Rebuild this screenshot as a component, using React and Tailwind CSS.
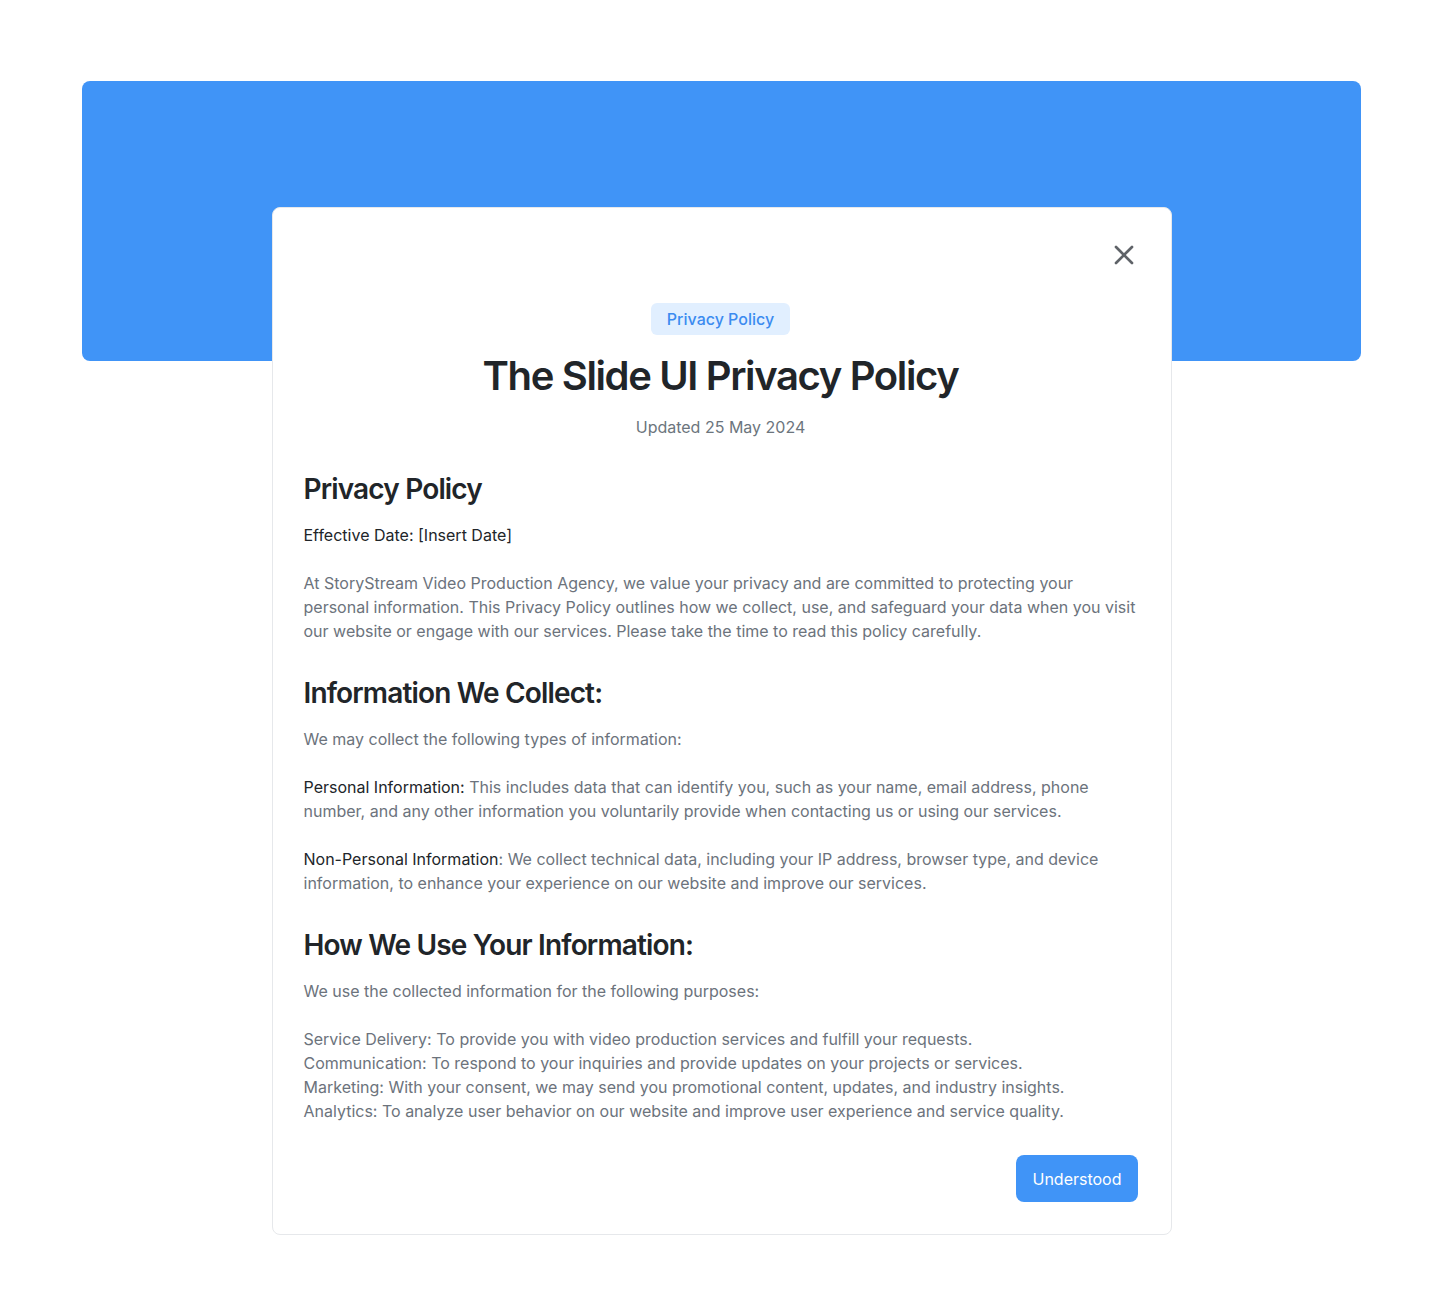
import { X } from "lucide-react";

const uses = [
  "Service Delivery: To provide you with video production services and fulfill your requests.",
  "Communication: To respond to your inquiries and provide updates on your projects or services.",
  "Marketing: With your consent, we may send you promotional content, updates, and industry insights.",
  "Analytics: To analyze user behavior on our website and improve user experience and service quality.",
];

export default function App() {
  return (
    <div
      className="min-h-screen bg-white pt-[81px] pb-[82px]"
      style={{ fontFamily: "Inter, 'Noto Sans', sans-serif" }}
    >
      <div className="mx-[82px] h-[280px] rounded-lg bg-[#4094f7]" />

      <div className="relative mx-auto -mt-[154px] w-[900px] rounded-lg border border-[#e6e8eb] bg-white pl-[31px] pr-[33px] pb-8 pt-[95px]">
        <button className="absolute right-[31px] top-[31px] text-[#5f6368]">
          <X size={32} strokeWidth={2} />
        </button>

        <div className="flex flex-col items-center">
          <span className="rounded-md bg-[#e1efff] px-4 py-[4px] text-base font-medium leading-6 text-[#3b8bf0]">
            Privacy Policy
          </span>
          <h1 className="mt-[17px] text-[40px] font-semibold leading-[48px] tracking-[-0.034em] text-[#212529]">
            The Slide UI Privacy Policy
          </h1>
          <p className="mt-[15px] text-base leading-6 text-[#6c757d]">Updated 25 May 2024</p>
        </div>

        <div className="mt-8 text-base leading-6 text-[#6c737c]">
          <h2 className="text-[28px] font-semibold leading-9 tracking-[-0.03em] text-[#212529]">
            Privacy Policy
          </h2>
          <p className="mt-4 text-[#212529]">Effective Date: [Insert Date]</p>
          <p className="mt-6">
            At StoryStream Video Production Agency, we value your privacy and are committed to protecting your
            personal information. This Privacy Policy outlines how we collect, use, and safeguard your data when you
            visit our website or engage with our services. Please take the time to read this policy carefully.
          </p>

          <h2 className="mt-8 text-[28px] font-semibold leading-9 tracking-[-0.03em] text-[#212529]">
            Information We Collect:
          </h2>
          <p className="mt-4">We may collect the following types of information:</p>
          <p className="mt-6">
            <span className="text-[#212529]">Personal Information:</span> This includes data that can identify you,
            such as your name, email address, phone number, and any other information you voluntarily provide when
            contacting us or using our services.
          </p>
          <p className="mt-6">
            <span className="text-[#212529]">Non-Personal Information</span>: We collect technical data, including
            your IP address, browser type, and device information, to enhance your experience on our website and
            improve our services.
          </p>

          <h2 className="mt-8 text-[28px] font-semibold leading-9 tracking-[-0.03em] text-[#212529]">
            How We Use Your Information:
          </h2>
          <p className="mt-4">We use the collected information for the following purposes:</p>
          <ul className="mt-6">
            {uses.map((u) => (
              <li key={u}>{u}</li>
            ))}
          </ul>
        </div>

        <div className="mt-8 flex justify-end">
          <button className="h-[47px] rounded-lg bg-[#4094f7] px-4 text-base text-white">Understood</button>
        </div>
      </div>
    </div>
  );
}
